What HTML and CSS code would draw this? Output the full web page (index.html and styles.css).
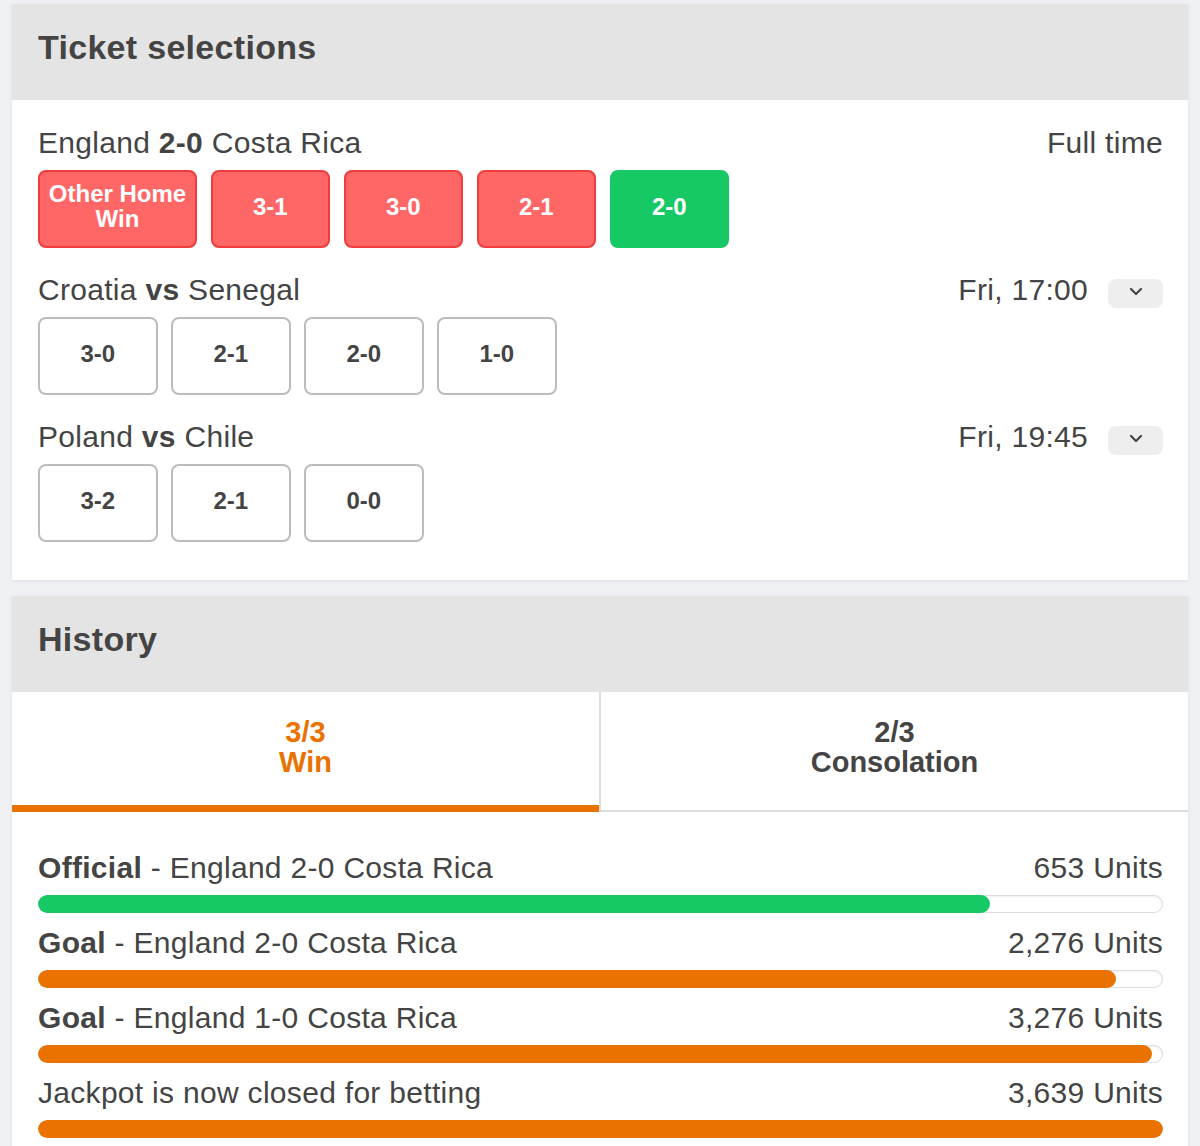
FILE: index.html
```html
<!DOCTYPE html>
<html lang="en">

<head>
    <meta charset="UTF-8">
    <meta name="viewport" content="width=device-width, initial-scale=1.0">
    <title>Ticket</title>
    <link rel="stylesheet" href="styles.css">
</head>

<body>
    <div class="card">
        <div class="card-header">
            <h2>Ticket selections</h2>
        </div>

        <div class="card-body selections">
            <div class="match">
                <div class="match-head">
                    <span class="teams">England <b>2-0</b> Costa Rica</span>
                    <span class="time">Full time</span>
                </div>
                <div class="picks">
                    <div class="pick lost wide">Other Home Win</div>
                    <div class="pick lost">3-1</div>
                    <div class="pick lost">3-0</div>
                    <div class="pick lost">2-1</div>
                    <div class="pick won">2-0</div>
                </div>
            </div>

            <div class="match">
                <div class="match-head">
                    <span class="teams">Croatia <b>vs</b> Senegal</span>
                    <span class="time">Fri, 17:00</span>
                    <button class="toggle">
                        <svg width="14" height="9" viewBox="0 0 14 9"><path d="M2 2l5 5 5-5" fill="none" stroke="#444" stroke-width="2.2" stroke-linecap="round" stroke-linejoin="round"/></svg>
                    </button>
                </div>
                <div class="picks">
                    <div class="pick">3-0</div>
                    <div class="pick">2-1</div>
                    <div class="pick">2-0</div>
                    <div class="pick">1-0</div>
                </div>
            </div>

            <div class="match">
                <div class="match-head">
                    <span class="teams">Poland <b>vs</b> Chile</span>
                    <span class="time">Fri, 19:45</span>
                    <button class="toggle">
                        <svg width="14" height="9" viewBox="0 0 14 9"><path d="M2 2l5 5 5-5" fill="none" stroke="#444" stroke-width="2.2" stroke-linecap="round" stroke-linejoin="round"/></svg>
                    </button>
                </div>
                <div class="picks">
                    <div class="pick">3-2</div>
                    <div class="pick">2-1</div>
                    <div class="pick">0-0</div>
                </div>
            </div>
        </div>
    </div>

    <div class="card">
        <div class="card-header">
            <h2>History</h2>
        </div>

        <div class="tabs">
            <div class="tab active">3/3<br>Win</div>
            <div class="tab">2/3<br>Consolation</div>
        </div>

        <div class="card-body history">
            <div class="result">
                <div class="result-head">
                    <span><b>Official</b> - England 2-0 Costa Rica</span>
                    <span>653 Units</span>
                </div>
                <div class="bar"><div class="fill green" style="width: 84.6%"></div></div>
            </div>
            <div class="result">
                <div class="result-head">
                    <span><b>Goal</b> - England 2-0 Costa Rica</span>
                    <span>2,276 Units</span>
                </div>
                <div class="bar"><div class="fill" style="width: 95.8%"></div></div>
            </div>
            <div class="result">
                <div class="result-head">
                    <span><b>Goal</b> - England 1-0 Costa Rica</span>
                    <span>3,276 Units</span>
                </div>
                <div class="bar"><div class="fill" style="width: 99%"></div></div>
            </div>
            <div class="result">
                <div class="result-head">
                    <span>Jackpot is now closed for betting</span>
                    <span>3,639 Units</span>
                </div>
                <div class="bar"><div class="fill" style="width: 100%"></div></div>
            </div>
        </div>
    </div>
</body>

</html>
```

FILE: styles.css
```css
body {
    margin: 0;
    padding: 4px 12px 0;
    background-color: #eef0f4;
    font-family: "Liberation Sans", Arial, sans-serif;
    color: #444;
}

.card {
    background-color: #fff;
    margin-bottom: 16px;
    box-shadow: 0 1px 3px rgba(0, 0, 0, 0.08);
}

.card-header {
    background-color: #e4e4e4;
    height: 96px;
    display: flex;
    align-items: center;
    padding: 0 26px 10px;
    box-sizing: border-box;
}

.card-header h2 {
    margin: 0;
    font-size: 34px;
    font-weight: bold;
    letter-spacing: 0.3px;
    color: #444;
}

.card-body {
    padding: 25px 25px 38px 26px;
}

.match {
    margin-bottom: 24px;
}

.match:last-child {
    margin-bottom: 0;
}

.match-head {
    display: flex;
    align-items: center;
    height: 36px;
    margin-bottom: 9px;
    font-size: 30px;
    letter-spacing: 0.3px;
}

.teams {
    flex-grow: 1;
}

.time {
    margin-right: 20px;
}

.match-head .time:last-child {
    margin-right: 0;
}

.toggle {
    width: 55px;
    height: 29px;
    border: none;
    border-radius: 8px;
    background-color: #eee;
    display: flex;
    align-items: center;
    justify-content: center;
    padding: 0 0 4px;
    margin-top: 6px;
}

.picks {
    display: flex;
    gap: 13.5px;
}

.pick {
    width: 119.5px;
    height: 78px;
    box-sizing: border-box;
    border: 2px solid #bcbcbc;
    border-radius: 8px;
    display: flex;
    align-items: center;
    justify-content: center;
    text-align: center;
    font-size: 24px;
    font-weight: bold;
    line-height: 25px;
    color: #444;
    padding-bottom: 6px;
}

.pick.wide {
    width: 159px;
    padding: 0 6px 6px;
}

.pick.lost {
    background-color: #ff6666;
    border-color: #f03c3c;
    color: #fff;
}

.pick.won {
    background-color: #16c965;
    border-color: #16c965;
    color: #fff;
}

.tabs {
    display: flex;
}

.tab {
    flex: 1;
    height: 120px;
    box-sizing: border-box;
    display: flex;
    align-items: center;
    justify-content: center;
    text-align: center;
    font-size: 29px;
    font-weight: bold;
    line-height: 30px;
    border-bottom: 2px solid #ddd;
    padding-bottom: 8px;
}

.tab + .tab {
    border-left: 2px solid #ddd;
}

.tab.active {
    color: #e97200;
    border-bottom: 7px solid #e97200;
    padding-bottom: 3px;
}

.history {
    padding-top: 38px;
}

.result {
    margin-bottom: 12px;
}

.result-head {
    display: flex;
    justify-content: space-between;
    align-items: center;
    height: 36px;
    margin-bottom: 9px;
    font-size: 30px;
    letter-spacing: 0.3px;
}

.bar {
    height: 18px;
    border-radius: 9px;
    background-color: #fff;
    box-shadow: inset 0 0 0 1px #ddd, inset 0 1px 3px rgba(0, 0, 0, 0.12);
    overflow: hidden;
}

.fill {
    height: 100%;
    border-radius: 9px;
    background-color: #e97200;
}

.fill.green {
    background-color: #16c965;
}
```
